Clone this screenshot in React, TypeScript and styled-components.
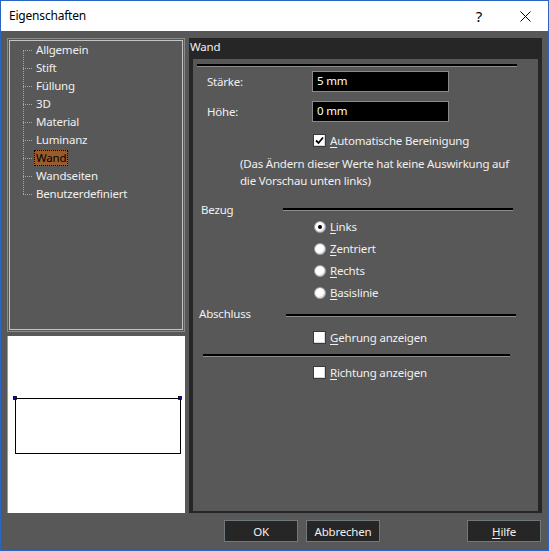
import React from 'react';
import styled, { createGlobalStyle } from 'styled-components';

const GlobalStyle = createGlobalStyle`
  html, body {
    margin: 0;
    padding: 0;
    background: #ffffff;
  }
  body {
    font-family: "Noto Sans", "Liberation Sans", sans-serif;
    font-size: 11.5px;
    letter-spacing: -0.2px;
  }
  * {
    box-sizing: border-box;
  }
`;

const Window = styled('div')`
  width: 549px;
  height: 551px;
  border: 1px solid #2a64c5;
  display: flex;
  flex-direction: column;
  background: #585858;
`;

const TitleBar = styled('div')`
  height: 30px;
  flex: none;
  background: #ffffff;
  display: flex;
  align-items: center;
  padding-left: 8px;
  color: #000000;
  font-size: 12px;
`;

const TitleText = styled('span')`
  flex: 1;
  line-height: 16px;
`;

const TitleButton = styled('span')`
  width: 46px;
  height: 30px;
  display: flex;
  align-items: center;
  justify-content: center;
  font-size: 15px;
  color: #000;
`;

const Body = styled('div')`
  flex: 1;
  display: flex;
  flex-direction: column;
  padding: 7px 6px 0 6px;
  color: #f0f0f0;
`;

const Main = styled('div')`
  display: flex;
  gap: 4px;
  height: 475px;
  flex: none;
`;

const LeftCol = styled('div')`
  width: 178px;
  display: flex;
  flex-direction: column;
  gap: 4px;
`;

const TreePanel = styled('div')`
  height: 294px;
  flex: none;
  border: 1px solid #8a8a8a;
  box-shadow: inset 0 0 0 1px #585858, inset 0 0 0 2px #c4c4c4;
  padding: 2px 0 0 0;
`;

const TreeList = styled('ul')`
  list-style: none;
  margin: 0;
  padding: 0 0 0 15px;
  position: relative;

  &::before {
    content: '';
    position: absolute;
    left: 15px;
    top: 9px;
    height: 144px;
    border-left: 1px dotted #a8a8a8;
  }
`;

const TreeItem = styled('li')`
  height: 18px;
  display: flex;
  align-items: center;

  &::before {
    content: '';
    width: 9px;
    margin-right: 2px;
    border-top: 1px dotted #a8a8a8;
  }
`;

const TreeLabel = styled('span')<{ $selected?: boolean }>`
  line-height: 14px;
  padding: 0 1px;
  border: 1px solid ${props => (props.$selected ? '#000' : 'transparent')};
  border-style: ${props => (props.$selected ? 'dotted' : 'solid')};
  background: ${props => (props.$selected ? '#9a5c2a' : 'transparent')};
  color: ${props => (props.$selected ? '#000000' : '#f0f0f0')};
`;

const Preview = styled('div')`
  flex: 1;
  min-height: 0;
  background: #ffffff;
  border-left: 1px solid #9a9a9a;

  svg {
    display: block;
  }
`;

const RightPanel = styled('div')`
  width: 354px;
  background: #262626;
  display: flex;
  flex-direction: column;
  padding: 0 4px 2px 4px;
`;

const PanelTitle = styled('div')`
  height: 21px;
  margin-left: -3px;
  line-height: 17px;
  color: #f0f0f0;
`;

const Content = styled('div')`
  flex: 1;
  background: #585858;
  display: flex;
  flex-direction: column;
  padding-top: 5px;
`;

const Separator = styled('div')<{ $left: number; $width: number; $top?: number }>`
  margin-left: ${props => props.$left}px;
  margin-top: ${props => props.$top ?? 0}px;
  width: ${props => props.$width}px;
  height: 3px;
  border-top: 2px solid #000000;
  border-bottom: 1px solid #8c8c8c;
`;

const FieldRow = styled('div')<{ $top: number }>`
  display: flex;
  align-items: center;
  margin-top: ${props => props.$top}px;
  padding-left: 14px;
`;

const FieldLabel = styled('span')`
  width: 105px;
`;

const Input = styled('div')`
  width: 137px;
  height: 21px;
  background: #000000;
  border: 1px solid #8a8a8a;
  padding-left: 4px;
  line-height: 18px;
  color: #ffffff;
`;

const OptionRow = styled('div')<{ $top: number; $left: number }>`
  display: flex;
  align-items: center;
  height: 17px;
  margin-top: ${props => props.$top}px;
  padding-left: ${props => props.$left}px;
  gap: 4px;
`;

const CheckBox = styled('span')`
  width: 13px;
  height: 13px;
  background: #ffffff;
  border: 1px solid #3a3a3a;
  box-shadow: inset -1px -1px 0 #d8d8d8;
  display: flex;
  align-items: center;
  justify-content: center;
`;

const Radio = styled('span')<{ $checked?: boolean }>`
  width: 12px;
  height: 12px;
  border-radius: 50%;
  background: #ffffff;
  border: 1px solid #9a9a9a;
  box-shadow: inset -1px -1px 0 #dcdcdc;
  display: flex;
  align-items: center;
  justify-content: center;

  &::after {
    content: '';
    width: 4px;
    height: 4px;
    border-radius: 50%;
    background: ${props => (props.$checked ? '#000000' : 'transparent')};
  }
`;

const Mnemonic = styled('span')`
  text-decoration: underline;
  text-underline-offset: 2px;
`;

const Note = styled('p')`
  margin: 6px 0 0 47px;
  width: 276px;
  line-height: 17px;
`;

const GroupHeader = styled('div')<{ $top: number; $left: number }>`
  display: flex;
  align-items: center;
  height: 17px;
  margin-top: ${props => props.$top}px;
  padding-left: ${props => props.$left}px;
`;

const GroupLabel = styled('span')<{ $width: number }>`
  width: ${props => props.$width}px;
`;

const GroupLine = styled('span')<{ $drop?: number }>`
  width: 230px;
  height: 3px;
  margin-top: ${props => props.$drop ?? 0}px;
  border-top: 2px solid #000000;
  border-bottom: 1px solid #8c8c8c;
`;

const RadioGroup = styled('div')`
  display: flex;
  flex-direction: column;
  gap: 5px;
`;

const Footer = styled('div')`
  flex: 1;
  display: flex;
  align-items: flex-start;
  padding: 7px 0 0 217px;
  gap: 8px;
`;

const Button = styled('button')<{ $push?: boolean }>`
  width: 74px;
  height: 22px;
  background: #262626;
  border: 1px solid #6f787c;
  color: #f0f0f0;
  font-family: "Noto Sans", "Liberation Sans", sans-serif;
  font-size: 11.5px;
  letter-spacing: -0.2px;
  padding: 0;
  margin-left: ${props => (props.$push ? 'auto' : '0')};
  margin-right: ${props => (props.$push ? '1px' : '0')};
`;

const CheckMark = () => (
  <svg width="9" height="9" viewBox="0 0 9 9">
    <path d="M1 4.5 L3.5 7 L8 1.5" fill="none" stroke="#000" strokeWidth="1.8" />
  </svg>
);

const CloseIcon = () => (
  <svg width="11" height="11" viewBox="0 0 11 11">
    <path d="M0.5 0.5 L10.5 10.5 M10.5 0.5 L0.5 10.5" stroke="#000" strokeWidth="1" />
  </svg>
);

const WallPreview = () => (
  <svg width="177" height="177" viewBox="0 0 177 177">
    <rect x="7.5" y="62.5" width="165" height="55" fill="none" stroke="#000" strokeWidth="1" />
    <rect x="5.5" y="60.5" width="3" height="3" fill="#0000d0" stroke="#000" strokeWidth="0.8" />
    <rect x="170.5" y="60.5" width="3" height="3" fill="#0000d0" stroke="#000" strokeWidth="0.8" />
  </svg>
);

const treeItems = [
  'Allgemein',
  'Stift',
  'Füllung',
  '3D',
  'Material',
  'Luminanz',
  'Wand',
  'Wandseiten',
  'Benutzerdefiniert',
];

const alignments = [
  { key: 'L', rest: 'inks', checked: true },
  { key: 'Z', rest: 'entriert' },
  { key: 'R', rest: 'echts' },
  { key: 'B', rest: 'asislinie' },
];

export default function App() {
  return (
    <>
      <GlobalStyle />
      <Window>
        <TitleBar>
          <TitleText>Eigenschaften</TitleText>
          <TitleButton>?</TitleButton>
          <TitleButton>
            <CloseIcon />
          </TitleButton>
        </TitleBar>
        <Body>
          <Main>
            <LeftCol>
              <TreePanel>
                <TreeList>
                  {treeItems.map(item => (
                    <TreeItem key={item}>
                      <TreeLabel $selected={item === 'Wand'}>{item}</TreeLabel>
                    </TreeItem>
                  ))}
                </TreeList>
              </TreePanel>
              <Preview>
                <WallPreview />
              </Preview>
            </LeftCol>
            <RightPanel>
              <PanelTitle>Wand</PanelTitle>
              <Content>
                <Separator $left={4} $width={320} />
                <FieldRow $top={4}>
                  <FieldLabel>Stärke:</FieldLabel>
                  <Input>5 mm</Input>
                </FieldRow>
                <FieldRow $top={9}>
                  <FieldLabel>Höhe:</FieldLabel>
                  <Input>0 mm</Input>
                </FieldRow>
                <OptionRow $top={10} $left={120}>
                  <CheckBox>
                    <CheckMark />
                  </CheckBox>
                  <span>
                    <Mnemonic>A</Mnemonic>utomatische Bereinigung
                  </span>
                </OptionRow>
                <Note>(Das Ändern dieser Werte hat keine Auswirkung auf die Vorschau unten links)</Note>
                <GroupHeader $top={12} $left={8}>
                  <GroupLabel $width={82}>Bezug</GroupLabel>
                  <GroupLine />
                </GroupHeader>
                <RadioGroup>
                  {alignments.map(a => (
                    <OptionRow key={a.key} $top={0} $left={121}>
                      <Radio $checked={a.checked} />
                      <span>
                        <Mnemonic>{a.key}</Mnemonic>
                        {a.rest}
                      </span>
                    </OptionRow>
                  ))}
                </RadioGroup>
                <GroupHeader $top={4} $left={6}>
                  <GroupLabel $width={87}>Abschluss</GroupLabel>
                  <GroupLine $drop={3} />
                </GroupHeader>
                <OptionRow $top={7} $left={120}>
                  <CheckBox />
                  <span>
                    <Mnemonic>G</Mnemonic>ehrung anzeigen
                  </span>
                </OptionRow>
                <Separator $left={10} $width={307} $top={8} />
                <OptionRow $top={7} $left={120}>
                  <CheckBox />
                  <span>
                    <Mnemonic>R</Mnemonic>ichtung anzeigen
                  </span>
                </OptionRow>
              </Content>
            </RightPanel>
          </Main>
          <Footer>
            <Button>OK</Button>
            <Button>Abbrechen</Button>
            <Button $push>
              <Mnemonic>H</Mnemonic>ilfe
            </Button>
          </Footer>
        </Body>
      </Window>
    </>
  );
}
